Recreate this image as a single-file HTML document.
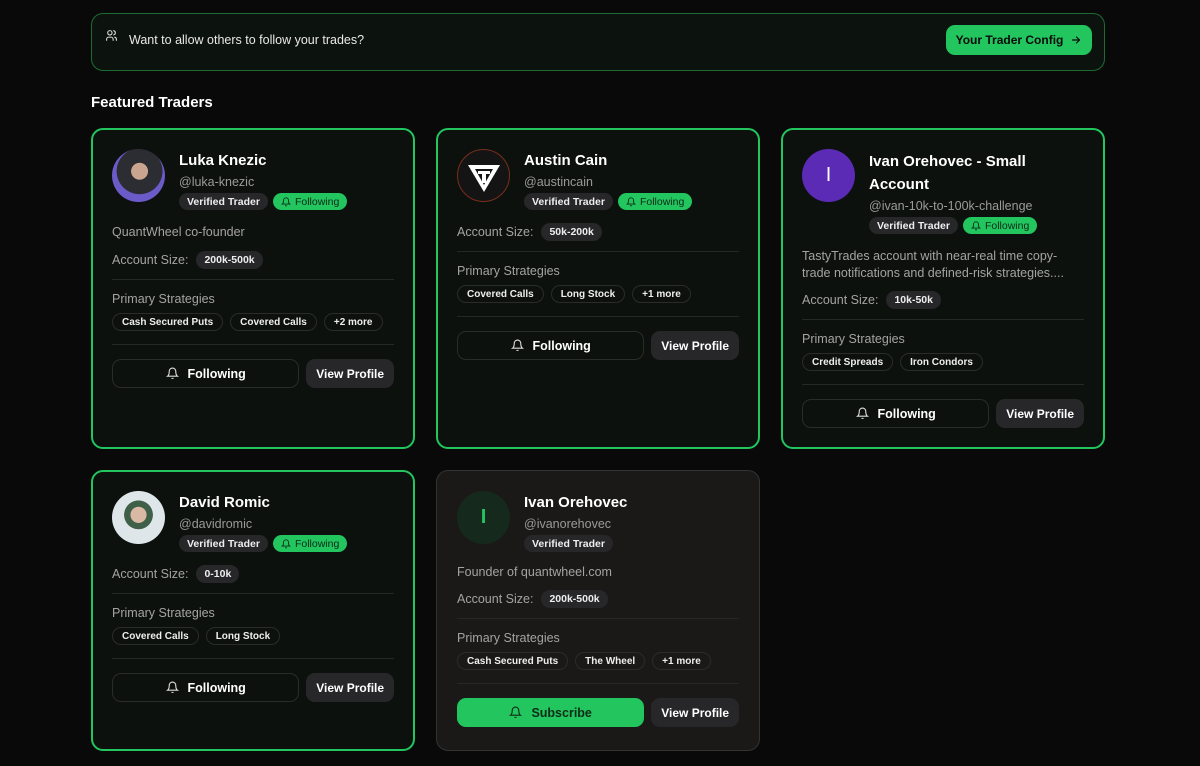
<!DOCTYPE html>
<html><head><meta charset="utf-8"><style>
*{box-sizing:border-box;margin:0;padding:0}
body{width:1200px;height:766px;background:#09090a;font-family:"Liberation Sans",sans-serif;color:#fff;position:relative;overflow:hidden}
.banner{position:absolute;left:91px;top:13px;width:1014px;height:58px;border:1px solid #1d6b33;border-radius:12px;background:#0c130e}
.banner .t{position:absolute;left:37px;top:19px;font-size:12.5px;color:#e8e8e8}
.banner svg.u{position:absolute;left:13px;top:15px}
.cfg{position:absolute;left:854px;top:11px;width:146px;height:30px;border-radius:9px;background:#22c55e;color:#0a0a0a;font-weight:bold;font-size:12px;display:flex;align-items:center;justify-content:center;gap:7px}
h2{position:absolute;left:91px;top:94px;font-size:15px;font-weight:bold}
.grid{position:absolute;left:91px;top:128px;display:grid;grid-template-columns:324px 324px 324px;column-gap:21px;row-gap:21px;grid-template-rows:321px 281px}
.card{border:2px solid #22c55e;border-radius:12px;background:#0c110e;padding:19px}
.card.g{border:1px solid #333;background:#1b1918;padding:20px}
.hd{display:flex;gap:14px;margin-bottom:12px}
.av{width:53px;height:53px;border-radius:50%;flex:none;display:flex;align-items:center;justify-content:center;font-size:20px;overflow:hidden}
.nm{font-size:15px;font-weight:bold;line-height:22px;margin-top:1px}
.hn{font-size:12.5px;color:#9a9a9a;line-height:20px}
.bd{display:flex;gap:5px;margin-top:1px}
.b{height:17px;border-radius:9px;background:#27272a;font-size:10.5px;font-weight:bold;padding:0 8px;display:flex;align-items:center;color:#eee}
.b.f{background:#22c55e;color:#0d2b17;gap:4px;font-weight:normal}
.bio{font-size:12.5px;color:#a3a3a3;line-height:20px}
.acc{display:flex;align-items:center;gap:8px;font-size:12.5px;color:#a3a3a3;height:20px;margin-top:8px}
.acc .b{height:18px}
.dv{height:1px;background:#262826;margin:9px 0 0}
.ps{font-size:12.5px;color:#a3a3a3;line-height:20px;margin-top:9px}
.ch{display:flex;gap:7px;margin-top:4px}
.c{height:18px;border:1px solid #2a2c2a;border-radius:9px;font-size:10px;font-weight:bold;padding:0 9px;display:flex;align-items:center;color:#eee}
.dv2{height:1px;background:#262826;margin:13px 0 14px}
.bt{display:flex;gap:7px}
.fw{width:188px;height:29px;border:1px solid #2a2c2a;border-radius:9px;display:flex;align-items:center;justify-content:center;gap:9px;font-size:12.5px;font-weight:bold}
.fw.s{background:#22c55e;border-color:#22c55e;color:#0d2b17}
.vp{width:88px;height:29px;border-radius:9px;background:#27272a;display:flex;align-items:center;justify-content:center;font-size:12px;font-weight:bold}
</style></head><body>
<div class="banner">
<svg class="u" width="13" height="13" viewBox="0 0 24 24" fill="none" stroke="#ddd" stroke-width="2" stroke-linecap="round"><circle cx="9" cy="7" r="4"/><path d="M3 21v-2a4 4 0 0 1 4-4h4a4 4 0 0 1 4 4v2M16 3.1a4 4 0 0 1 0 7.8M21 21v-2a4 4 0 0 0-3-3.9"/></svg>
<div class="t">Want to allow others to follow your trades?</div>
<div class="cfg">Your Trader Config <svg width="12" height="12" viewBox="0 0 24 24" fill="none" stroke="#0a0a0a" stroke-width="2.4" stroke-linecap="round"><path d="M5 12h14M13 6l6 6-6 6"/></svg></div>
</div>
<h2>Featured Traders</h2>
<div class="grid">

<div class="card">
<div class="hd"><div class="av" style="background:radial-gradient(circle at 52% 42%,#c9a48e 0 20%,#2c2c33 21% 55%,#6a5bc8 56%)"></div>
<div><div class="nm">Luka Knezic</div><div class="hn">@luka-knezic</div>
<div class="bd"><div class="b">Verified Trader</div><div class="b f"><svg width="10" height="10" viewBox="0 0 24 24" fill="none" stroke="#0d2b17" stroke-width="2.2"><path d="M6 8a6 6 0 0 1 12 0c0 7 3 9 3 9H3s3-2 3-9M10 21h4"/></svg>Following</div></div></div></div>
<div class="bio">QuantWheel co-founder</div>
<div class="acc">Account Size: <div class="b">200k-500k</div></div>
<div class="dv"></div><div class="ps">Primary Strategies</div>
<div class="ch"><div class="c">Cash Secured Puts</div><div class="c">Covered Calls</div><div class="c">+2 more</div></div>
<div class="dv2"></div>
<div class="bt"><div class="fw"><svg width="13" height="13" viewBox="0 0 24 24" fill="none" stroke="#ddd" stroke-width="2"><path d="M6 8a6 6 0 0 1 12 0c0 7 3 9 3 9H3s3-2 3-9M10 21h4"/></svg>Following</div><div class="vp">View Profile</div></div>
</div>

<div class="card">
<div class="hd"><div class="av" style="background:#141414;border:1px solid #7a2e1a"><svg width="40" height="40" viewBox="0 0 40 40"><path d="M4 9h32L20 36z" fill="#fff"/><path d="M11 13h18L20 29z" fill="#141414"/><path d="M14 15h12v3h-4v9h-4v-9h-4z" fill="#fff"/></svg></div>
<div><div class="nm">Austin Cain</div><div class="hn">@austincain</div>
<div class="bd"><div class="b">Verified Trader</div><div class="b f"><svg width="10" height="10" viewBox="0 0 24 24" fill="none" stroke="#0d2b17" stroke-width="2.2"><path d="M6 8a6 6 0 0 1 12 0c0 7 3 9 3 9H3s3-2 3-9M10 21h4"/></svg>Following</div></div></div></div>
<div class="acc" style="margin-top:0">Account Size: <div class="b">50k-200k</div></div>
<div class="dv"></div><div class="ps">Primary Strategies</div>
<div class="ch"><div class="c">Covered Calls</div><div class="c">Long Stock</div><div class="c">+1 more</div></div>
<div class="dv2"></div>
<div class="bt"><div class="fw"><svg width="13" height="13" viewBox="0 0 24 24" fill="none" stroke="#ddd" stroke-width="2"><path d="M6 8a6 6 0 0 1 12 0c0 7 3 9 3 9H3s3-2 3-9M10 21h4"/></svg>Following</div><div class="vp">View Profile</div></div>
</div>

<div class="card">
<div class="hd"><div class="av" style="background:#5b2bb5;color:#fff">I</div>
<div><div class="nm" style="line-height:23px">Ivan Orehovec - Small<br>Account</div><div class="hn">@ivan-10k-to-100k-challenge</div>
<div class="bd"><div class="b">Verified Trader</div><div class="b f"><svg width="10" height="10" viewBox="0 0 24 24" fill="none" stroke="#0d2b17" stroke-width="2.2"><path d="M6 8a6 6 0 0 1 12 0c0 7 3 9 3 9H3s3-2 3-9M10 21h4"/></svg>Following</div></div></div></div>
<div class="bio" style="line-height:17px;margin-top:14px">TastyTrades account with near-real time copy-trade notifications and defined-risk strategies....</div>
<div class="acc" style="margin-top:8px">Account Size: <div class="b">10k-50k</div></div>
<div class="dv"></div><div class="ps">Primary Strategies</div>
<div class="ch"><div class="c">Credit Spreads</div><div class="c">Iron Condors</div></div>
<div class="dv2"></div>
<div class="bt"><div class="fw"><svg width="13" height="13" viewBox="0 0 24 24" fill="none" stroke="#ddd" stroke-width="2"><path d="M6 8a6 6 0 0 1 12 0c0 7 3 9 3 9H3s3-2 3-9M10 21h4"/></svg>Following</div><div class="vp">View Profile</div></div>
</div>

<div class="card">
<div class="hd"><div class="av" style="background:radial-gradient(circle at 50% 45%,#d9b8a4 0 20%,#3f5f49 21% 36%,#dfe6ea 37%)"></div>
<div><div class="nm">David Romic</div><div class="hn">@davidromic</div>
<div class="bd"><div class="b">Verified Trader</div><div class="b f"><svg width="10" height="10" viewBox="0 0 24 24" fill="none" stroke="#0d2b17" stroke-width="2.2"><path d="M6 8a6 6 0 0 1 12 0c0 7 3 9 3 9H3s3-2 3-9M10 21h4"/></svg>Following</div></div></div></div>
<div class="acc" style="margin-top:0">Account Size: <div class="b">0-10k</div></div>
<div class="dv"></div><div class="ps">Primary Strategies</div>
<div class="ch"><div class="c">Covered Calls</div><div class="c">Long Stock</div></div>
<div class="dv2"></div>
<div class="bt"><div class="fw"><svg width="13" height="13" viewBox="0 0 24 24" fill="none" stroke="#ddd" stroke-width="2"><path d="M6 8a6 6 0 0 1 12 0c0 7 3 9 3 9H3s3-2 3-9M10 21h4"/></svg>Following</div><div class="vp">View Profile</div></div>
</div>

<div class="card g">
<div class="hd"><div class="av" style="background:#15291c;color:#22c55e;font-weight:bold">I</div>
<div><div class="nm">Ivan Orehovec</div><div class="hn">@ivanorehovec</div>
<div class="bd"><div class="b">Verified Trader</div></div></div></div>
<div class="bio" style="margin-top:-2px">Founder of quantwheel.com</div>
<div class="acc" style="margin-top:7px">Account Size: <div class="b">200k-500k</div></div>
<div class="dv"></div><div class="ps">Primary Strategies</div>
<div class="ch"><div class="c">Cash Secured Puts</div><div class="c">The Wheel</div><div class="c">+1 more</div></div>
<div class="dv2"></div>
<div class="bt"><div class="fw s"><svg width="13" height="13" viewBox="0 0 24 24" fill="none" stroke="#0d2b17" stroke-width="2"><path d="M6 8a6 6 0 0 1 12 0c0 7 3 9 3 9H3s3-2 3-9M10 21h4"/></svg>Subscribe</div><div class="vp">View Profile</div></div>
</div>

</div>
</body></html>
